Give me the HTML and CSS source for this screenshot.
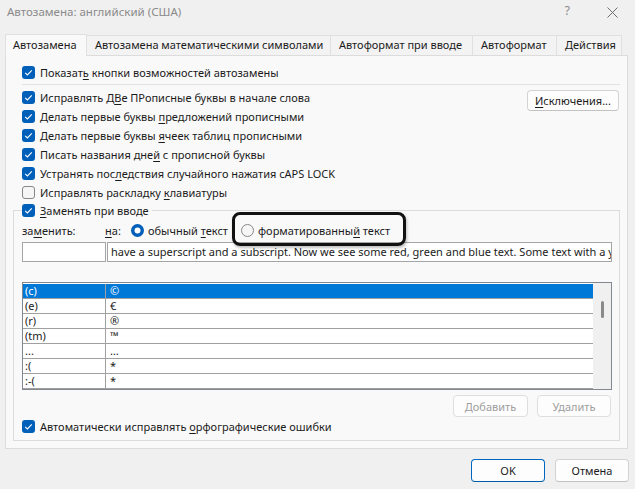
FILE: index.html
```html
<!DOCTYPE html>
<html lang="ru">
<head>
    <meta charset="UTF-8">
    <title>Автозамена: английский (США)</title>
    <link rel="stylesheet" href="styles.css">
</head>
<body>
<div class="dialog">
    <!-- заголовок окна -->
    <div class="titlebar">
        <span class="title">Автозамена: английский (США)</span>
        <span class="help">?</span>
        <svg class="close" width="11" height="11" viewBox="0 0 11 11">
            <path d="M0.5 0.5L10.5 10.5M10.5 0.5L0.5 10.5" stroke="#6e6e6e" stroke-width="1" fill="none"/>
        </svg>
    </div>

    <!-- вкладки -->
    <div class="tabs">
        <div class="tab tab-auto active">Автозамена</div>
        <div class="tab tab-math">Автозамена математическими символами</div>
        <div class="tab tab-typing">Автоформат при вводе</div>
        <div class="tab tab-format">Автоформат</div>
        <div class="tab tab-actions">Действия</div>
    </div>

    <div class="panel">
        <label class="check-row first">
            <span class="cb on"><svg width="13" height="13" viewBox="0 0 13 13"><path d="M3.2 6.8L5.4 9L9.8 4.4" stroke="#fff" stroke-width="1.1" fill="none"/></svg></span>
            <span>Показат<u>ь</u> кнопки возможностей автозамены</span>
        </label>
        <div class="sep"></div>

        <div class="options">
            <div class="option-list">
                <label class="check-row">
                    <span class="cb on"><svg width="13" height="13" viewBox="0 0 13 13"><path d="M3.2 6.8L5.4 9L9.8 4.4" stroke="#fff" stroke-width="1.1" fill="none"/></svg></span>
                    <span>Исправлять Д<u>В</u>е ПРописные буквы в начале слова</span>
                </label>
                <label class="check-row">
                    <span class="cb on"><svg width="13" height="13" viewBox="0 0 13 13"><path d="M3.2 6.8L5.4 9L9.8 4.4" stroke="#fff" stroke-width="1.1" fill="none"/></svg></span>
                    <span>Делать первые буквы <u>п</u>редложений прописными</span>
                </label>
                <label class="check-row">
                    <span class="cb on"><svg width="13" height="13" viewBox="0 0 13 13"><path d="M3.2 6.8L5.4 9L9.8 4.4" stroke="#fff" stroke-width="1.1" fill="none"/></svg></span>
                    <span>Делать первые буквы <u>я</u>чеек таблиц прописными</span>
                </label>
                <label class="check-row">
                    <span class="cb on"><svg width="13" height="13" viewBox="0 0 13 13"><path d="M3.2 6.8L5.4 9L9.8 4.4" stroke="#fff" stroke-width="1.1" fill="none"/></svg></span>
                    <span>Писать названия дне<u>й</u> с прописной буквы</span>
                </label>
                <label class="check-row">
                    <span class="cb on"><svg width="13" height="13" viewBox="0 0 13 13"><path d="M3.2 6.8L5.4 9L9.8 4.4" stroke="#fff" stroke-width="1.1" fill="none"/></svg></span>
                    <span>Устранять пос<u>л</u>едствия случайного нажатия cAPS LOCK</span>
                </label>
                <label class="check-row">
                    <span class="cb"></span>
                    <span>Исправлять раскладку <u>к</u>лавиатуры</span>
                </label>
            </div>
            <button class="btn btn-exceptions"><u>И</u>сключения...</button>
        </div>

        <!-- группа замены -->
        <fieldset class="group">
            <legend class="check-row">
                <span class="cb on"><svg width="13" height="13" viewBox="0 0 13 13"><path d="M3.2 6.8L5.4 9L9.8 4.4" stroke="#fff" stroke-width="1.1" fill="none"/></svg></span>
                <span><u>З</u>аменять при вводе</span>
            </legend>

            <div class="replace-labels">
                <span class="lbl-from">за<u>м</u>енить:</span>
                <span class="lbl-to"><u>н</u>а:</span>
                <label class="radio-opt plain">
                    <svg class="radio" width="13" height="13" viewBox="0 0 13 13"><circle cx="6.5" cy="6.5" r="6.5" fill="#005fb8"/><circle cx="6.5" cy="6.5" r="3" fill="#fff"/></svg>
                    <span>обычный <u>т</u>екст</span>
                </label>
                <label class="radio-opt">
                    <svg class="radio" width="13" height="13" viewBox="0 0 13 13"><circle cx="6.5" cy="6.5" r="6" fill="#f6f6f6" stroke="#868686" stroke-width="1"/></svg>
                    <span>форматированны<u>й</u> текст</span>
                </label>
                <div class="highlight"></div>
            </div>

            <div class="replace-inputs">
                <div class="field field-from"></div>
                <div class="field field-to">have a superscript and a subscript. Now we see some red, green and blue text. Some text with a yellow highlight.</div>
            </div>

            <div class="list">
                <div class="list-rows">
                    <div class="list-row selected"><span class="cell-key">(c)</span><span class="cell-val">©</span></div>
                    <div class="list-row"><span class="cell-key">(e)</span><span class="cell-val">€</span></div>
                    <div class="list-row"><span class="cell-key">(r)</span><span class="cell-val">®</span></div>
                    <div class="list-row"><span class="cell-key">(tm)</span><span class="cell-val">™</span></div>
                    <div class="list-row"><span class="cell-key">...</span><span class="cell-val">…</span></div>
                    <div class="list-row"><span class="cell-key">:(</span><span class="cell-val">*</span></div>
                    <div class="list-row"><span class="cell-key">:-(</span><span class="cell-val">*</span></div>
                </div>
                <div class="scrollbar"><div class="thumb"></div></div>
            </div>

            <div class="list-buttons">
                <button class="btn btn-add" disabled>Добавить</button>
                <button class="btn btn-del" disabled>Удалить</button>
            </div>

            <label class="check-row">
                <span class="cb on"><svg width="13" height="13" viewBox="0 0 13 13"><path d="M3.2 6.8L5.4 9L9.8 4.4" stroke="#fff" stroke-width="1.1" fill="none"/></svg></span>
                <span>Автоматически исправлять <u>о</u>рфографические ошибки</span>
            </label>
        </fieldset>
    </div>

    <div class="footer">
        <button class="btn btn-ok">OK</button>
        <button class="btn btn-cancel">Отмена</button>
    </div>
</div>
</body>
</html>
```

FILE: styles.css
```css
:root {
    --accent: #005fb8;
    --border: #dcdcdc;
    --panel-bg: #f9f9f9;
}

body {
    margin: 0;
    background: #f0f0f0;
    font-family: "Noto Sans", "Liberation Sans", sans-serif;
    font-size: 11px;
    color: #1b1b1b;
}

.dialog {
    width: 635px;
    height: 489px;
    overflow: hidden;
}

u {
    text-underline-offset: 2px;
}

/* заголовок */
.titlebar {
    height: 34px;
    display: flex;
    align-items: flex-start;
}

.title {
    padding: 4px 0 0 7px;
    line-height: 16px;
    font-size: 11.5px;
    color: #8a8a8a;
}

.help {
    margin: 3px 0 0 auto;
    line-height: 16px;
    font-size: 12px;
    color: #8a8a8a;
}

.close {
    margin: 7px 17px 0 37px;
}

/* вкладки */
.tabs {
    display: flex;
    align-items: flex-end;
    height: 21px;
    padding-left: 5px;
}

.tab {
    box-sizing: border-box;
    height: 20px;
    border: 1px solid #e0e0e0;
    border-bottom: none;
    margin-right: -1px;
    background: #f3f3f3;
    padding-left: 8px;
    line-height: 18px;
    white-space: nowrap;
}

.tab.active {
    position: relative;
    z-index: 1;
    height: 22px;
    margin-bottom: -1px;
    background: var(--panel-bg);
    padding-left: 7px;
    line-height: 20px;
}

.tab-auto { width: 82px; }
.tab-math { width: 245px; }
.tab-typing { width: 143px; }
.tab-format { width: 85px; }
.tab-actions { width: 66px; }

/* панель */
.panel {
    box-sizing: border-box;
    width: 623px;
    height: 394px;
    margin-left: 5px;
    padding: 7px 0 0 7px;
    border: 1px solid var(--border);
    background: var(--panel-bg);
}

.check-row {
    display: flex;
    align-items: center;
    gap: 5px;
    height: 19px;
    white-space: nowrap;
}

.panel > .check-row,
.option-list {
    padding-left: 9px;
}

.cb {
    box-sizing: border-box;
    width: 13px;
    height: 13px;
    flex: none;
    border: 1px solid #878787;
    border-radius: 3px;
    background: #f6f6f6;
}

.cb.on {
    border: none;
    background: var(--accent);
}

.cb svg {
    display: block;
}

.sep {
    width: 598px;
    height: 1px;
    margin: 2px 0 0 9px;
    background: #e2e2e2;
}

.options {
    display: flex;
    justify-content: space-between;
    width: 607px;
    margin-top: 3px;
}

.btn {
    box-sizing: border-box;
    height: 22px;
    padding: 0;
    border: 1px solid #d3d3d3;
    border-bottom-color: #c2c2c2;
    border-radius: 4px;
    background: #fdfdfd;
    font-family: inherit;
    font-size: 11px;
    color: #1b1b1b;
}

.btn:disabled {
    color: #9d9d9d;
    border-color: #dedede;
}

.btn-exceptions {
    width: 92px;
    height: 21px;
    margin: 2px 1px 0 0;
}

/* группа "Заменять при вводе" */
.group {
    box-sizing: border-box;
    width: 607px;
    min-width: 0;
    margin: 0;
    padding: 2px 7px 4px 8px;
    border: 1px solid var(--border);
}

.group legend {
    padding: 0 3px 0 0;
    height: 17px;
}

.replace-labels {
    position: relative;
    display: flex;
    align-items: center;
    height: 19px;
    white-space: nowrap;
}

.lbl-from { width: 83px; }
.lbl-to { width: 26px; }

.radio-opt {
    display: flex;
    align-items: center;
    gap: 4px;
}

.radio-opt.plain { width: 110px; }

.radio { display: block; }

.highlight {
    position: absolute;
    left: 210px;
    top: -9px;
    width: 174px;
    height: 34px;
    box-sizing: border-box;
    border: 3px solid #111;
    border-radius: 8px;
    box-shadow: 1px 2px 3px rgba(0, 0, 0, 0.25);
}

.replace-inputs {
    display: flex;
    margin-top: 2px;
    height: 20px;
}

.field {
    box-sizing: border-box;
    height: 20px;
    border: 1px solid #a5a5a5;
    background: #fff;
}

.field-from {
    width: 84px;
}

.field-to {
    flex: 1;
    margin-left: 1px;
    padding-left: 3px;
    line-height: 17px;
    white-space: nowrap;
    overflow: hidden;
}

/* таблица замен */
.list {
    box-sizing: border-box;
    display: flex;
    width: 590px;
    height: 108px;
    margin-top: 20px;
    border: 1px solid #828790;
    background: #fff;
}

.list-rows {
    flex: 1;
    padding-top: 1px;
}

.list-row {
    display: flex;
    height: 14px;
    line-height: 14px;
    border-bottom: 1px solid #a0a0a0;
}

.list-row.selected {
    background: #0078d7;
    color: #fff;
}

.cell-key {
    box-sizing: border-box;
    width: 83px;
    padding-left: 2px;
    border-right: 1px solid #a0a0a0;
}

.cell-val {
    padding-left: 4px;
}

.scrollbar {
    width: 18px;
    background: #f0f0f0;
}

.thumb {
    width: 3px;
    height: 17px;
    margin: 18px 0 0 8px;
    border-radius: 2px;
    background: #8a8a8a;
}

.list-buttons {
    display: flex;
    justify-content: flex-end;
    gap: 9px;
    margin: 5px 1px 0 0;
}

.btn-add { width: 75px; }
.btn-del { width: 74px; }

/* кнопки диалога */
.footer {
    display: flex;
    justify-content: flex-end;
    gap: 10px;
    margin-top: 10px;
    padding-right: 6px;
}

.btn-ok,
.btn-cancel {
    width: 74px;
    height: 23px;
}

.btn-ok {
    border-color: #0067c0;
    border-bottom-color: #0058a8;
}
```
